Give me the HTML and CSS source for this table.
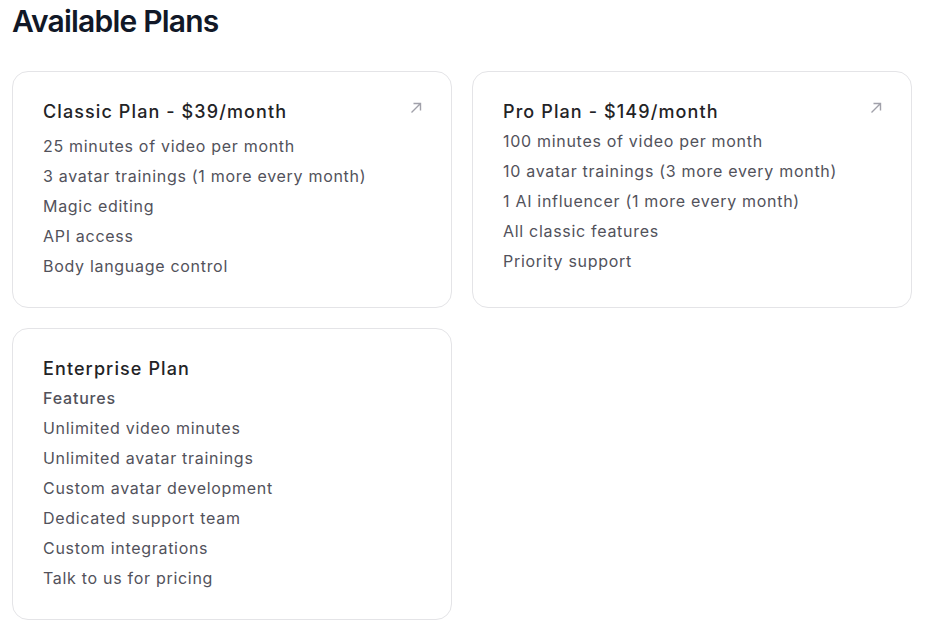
FILE: index.html
```html
<!DOCTYPE html>
<html lang="en">
<head>
<meta charset="utf-8">
<title>Available Plans</title>
<link rel="stylesheet" href="styles.css">
</head>
<body>
<main class="page">
  <h1 class="title">Available Plans</h1>
  <div class="plans">
    <section class="card">
      <div class="card-head card-head--spaced">
        <h2 class="plan-name">Classic Plan - $39/month</h2>
        <svg class="arrow" width="12" height="12" viewBox="0 0 12 12" aria-hidden="true"><path d="M1.5 10.5 L10.5 1.5 M3.5 1.5 H10.5 V8.5" fill="none" stroke="currentColor" stroke-width="1.4"/></svg>
      </div>
      <ul class="features">
        <li>25 minutes of video per month</li>
        <li>3 avatar trainings (1 more every month)</li>
        <li>Magic editing</li>
        <li>API access</li>
        <li>Body language control</li>
      </ul>
    </section>
    <section class="card">
      <div class="card-head">
        <h2 class="plan-name">Pro Plan - $149/month</h2>
        <svg class="arrow" width="12" height="12" viewBox="0 0 12 12" aria-hidden="true"><path d="M1.5 10.5 L10.5 1.5 M3.5 1.5 H10.5 V8.5" fill="none" stroke="currentColor" stroke-width="1.4"/></svg>
      </div>
      <ul class="features">
        <li>100 minutes of video per month</li>
        <li>10 avatar trainings (3 more every month)</li>
        <li>1 AI influencer (1 more every month)</li>
        <li>All classic features</li>
        <li>Priority support</li>
      </ul>
    </section>
    <section class="card">
      <div class="card-head">
        <h2 class="plan-name">Enterprise Plan</h2>
      </div>
      <ul class="features">
        <li class="features-label">Features</li>
        <li>Unlimited video minutes</li>
        <li>Unlimited avatar trainings</li>
        <li>Custom avatar development</li>
        <li>Dedicated support team</li>
        <li>Custom integrations</li>
        <li>Talk to us for pricing</li>
      </ul>
    </section>
  </div>
</main>
</body>
</html>
```
FILE: styles.css
```css
* { box-sizing: border-box; }

html, body {
  margin: 0;
  padding: 0;
  background: #ffffff;
}

body {
  font-family: Inter, "Noto Sans", "Liberation Sans", sans-serif;
  color: #27272a;
}

.page {
  padding: 3px 12px 12px;
}

.title {
  margin: 0 0 32px;
  font-size: 30px;
  line-height: 36px;
  font-weight: 600;
  color: #111827;
  letter-spacing: -0.8px;
}

.plans {
  display: grid;
  grid-template-columns: 440px 440px;
  column-gap: 20px;
  row-gap: 20px;
}

.card {
  border: 1px solid #e4e4e7;
  border-radius: 16px;
  padding: 26px 30px 26px;
  background: #ffffff;
}

.card-head {
  display: flex;
  justify-content: space-between;
  align-items: flex-start;
}

.card-head--spaced {
  margin-bottom: 5px;
}

.plan-name {
  margin: 0;
  font-size: 18px;
  line-height: 28px;
  font-weight: 500;
  letter-spacing: 1.1px;
  color: #232326;
}

.arrow {
  flex: none;
  margin-top: 4px;
  margin-right: -1px;
  color: #a1a1aa;
}

.features {
  list-style: none;
  margin: 0;
  padding: 0;
}

.features li {
  font-size: 16px;
  line-height: 30px;
  letter-spacing: 0.7px;
  color: #52525b;
}

.features .features-label {
  font-weight: 500;
  letter-spacing: 0.8px;
  color: #52525b;
}
```
